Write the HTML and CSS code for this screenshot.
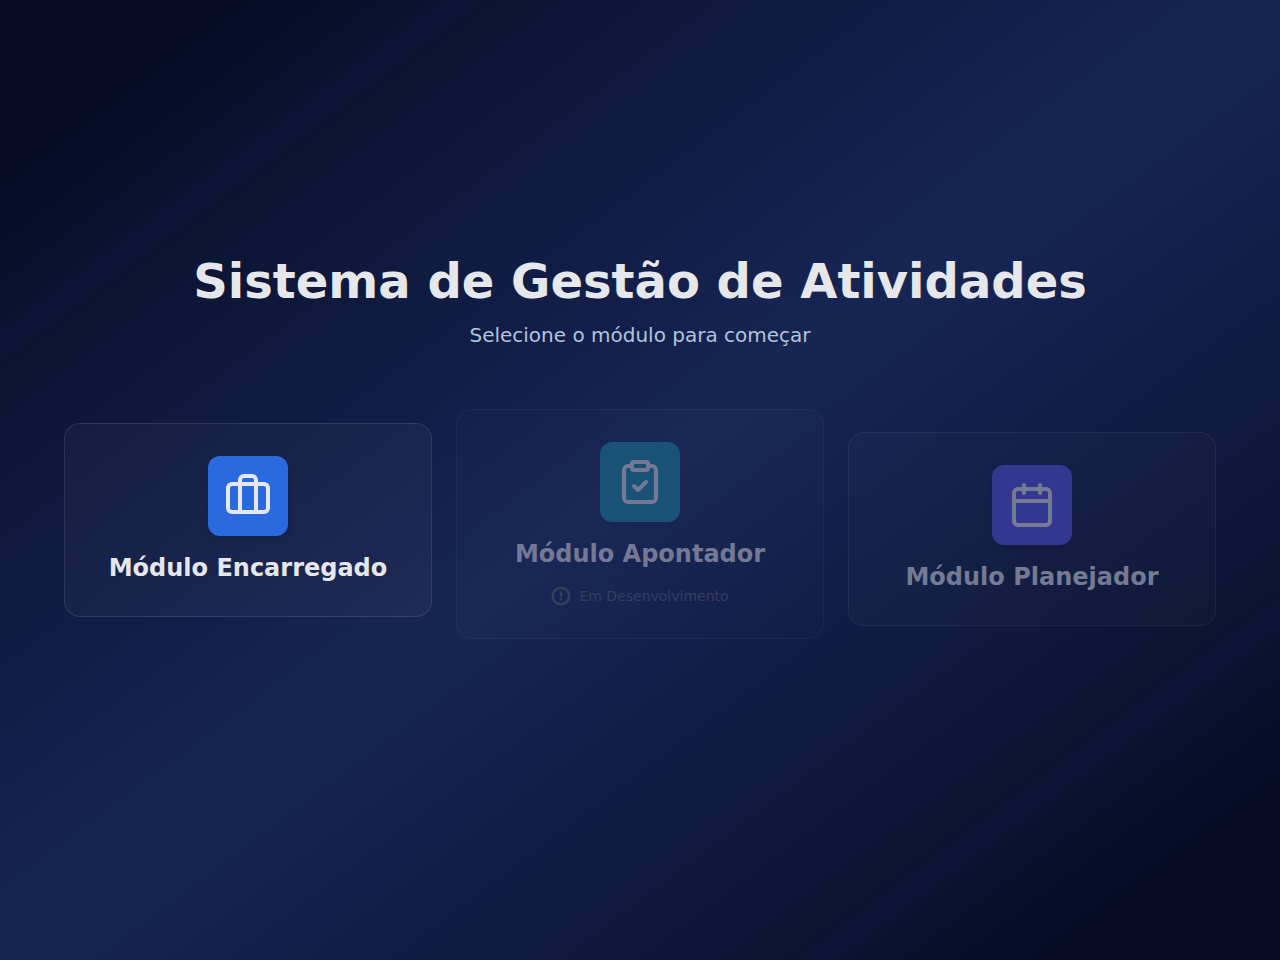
FILE: index.html
```html
<!DOCTYPE html>
<html lang="pt-BR">
<head>
    <meta charset="UTF-8">
    <meta name="viewport" content="width=device-width, initial-scale=1.0">
    <title>Sistema de Gestão de Atividades</title>
    <link rel="stylesheet" href="styles.css">
</head>
<body>

    <main class="pagina">
        <!-- Cabeçalho -->
        <header class="cabecalho">
            <h1>Sistema de Gestão de Atividades</h1>
            <p>Selecione o módulo para começar</p>
        </header>

        <!-- Módulos -->
        <div class="modulos">
            <button type="button" class="modulo encarregado">
                <span class="icone">
                    <svg viewBox="0 0 24 24" aria-hidden="true">
                        <path d="M16 20V4a2 2 0 0 0-2-2h-4a2 2 0 0 0-2 2v16"/>
                        <rect x="2" y="6" width="20" height="14" rx="2"/>
                    </svg>
                </span>
                <span class="nome">Módulo Encarregado</span>
            </button>

            <button type="button" class="modulo apontador">
                <span class="icone">
                    <svg viewBox="0 0 24 24" aria-hidden="true">
                        <rect x="8" y="2" width="8" height="4" rx="1"/>
                        <path d="M16 4h2a2 2 0 0 1 2 2v14a2 2 0 0 1-2 2H6a2 2 0 0 1-2-2V6a2 2 0 0 1 2-2h2"/>
                        <path d="m9 14 2 2 4-4"/>
                    </svg>
                </span>
                <span class="nome">Módulo Apontador</span>
                <span class="aviso">
                    <svg viewBox="0 0 24 24" aria-hidden="true">
                        <circle cx="12" cy="12" r="10"/>
                        <path d="M12 8v4M12 16h.01"/>
                    </svg>
                    Em Desenvolvimento
                </span>
            </button>

            <button type="button" class="modulo planejador">
                <span class="icone">
                    <svg viewBox="0 0 24 24" aria-hidden="true">
                        <path d="M8 2v4M16 2v4"/>
                        <rect x="3" y="4" width="18" height="18" rx="2"/>
                        <path d="M3 10h18"/>
                    </svg>
                </span>
                <span class="nome">Módulo Planejador</span>
            </button>
        </div>
    </main>

</body>
</html>
```
FILE: styles.css
```css
* {
    box-sizing: border-box;
}

body {
    margin: 0;
    font-family: "DejaVu Sans", sans-serif;
    color: #e6e7eb;
    background: #050a23;
}

.pagina {
    min-height: 100vh;
    padding: 0 24px;
    display: flex;
    flex-direction: column;
    align-items: center;
    justify-content: center;
    background: linear-gradient(to bottom right, #060a24 8%, #091230 17%, #0b1638 18%, #0a1432 19%, #131f4a 40%, #172553 49%, #172553 51%, #131f4a 60%, #0a1432 81%, #0b1638 82%, #091230 83%, #060a24 92%);
}

/* Cabeçalho */
.cabecalho {
    margin-bottom: 60px;
    text-align: center;
}

.cabecalho h1 {
    margin: 0 0 16px;
    font-size: 48px;
    line-height: 48px;
    font-weight: bold;
}

.cabecalho p {
    margin: 0;
    font-size: 20px;
    line-height: 28px;
    color: #b2c3dc;
}

/* Módulos */
.modulos {
    width: 100%;
    max-width: 1152px;
    margin-bottom: 64px;
    display: grid;
    grid-template-columns: repeat(3, 1fr);
    align-items: center;
    gap: 24px;
}

.modulo {
    display: flex;
    flex-direction: column;
    align-items: center;
    gap: 16px;
    padding: 32px;
    font-family: inherit;
    color: #e6e7eb;
    background: rgba(255, 255, 255, 0.03);
    border: 1px solid rgba(255, 255, 255, 0.1);
    border-radius: 16px;
    cursor: pointer;
}

.icone {
    width: 80px;
    height: 80px;
    display: flex;
    align-items: center;
    justify-content: center;
    border-radius: 12px;
    box-shadow: 0 4px 6px rgba(0, 0, 0, 0.1);
}

.modulo svg {
    fill: none;
    stroke: currentColor;
    stroke-width: 2;
    stroke-linecap: round;
    stroke-linejoin: round;
}

.icone svg {
    width: 48px;
    height: 48px;
}

.nome {
    font-size: 24px;
    line-height: 32px;
    font-weight: bold;
}

.aviso {
    display: flex;
    align-items: center;
    gap: 8px;
    font-size: 14px;
    line-height: 20px;
    color: #373e5c;
}

.modulo .aviso svg {
    width: 20px;
    height: 20px;
    stroke-width: 3;
}

/* Entrada escalonada dos cartões */
.encarregado {
    margin-bottom: 8px;
}

.encarregado .icone {
    background: #2b69df;
}

.apontador {
    color: #737994;
    background: rgba(255, 255, 255, 0.01);
    border-color: rgba(255, 255, 255, 0.04);
}

.apontador .icone {
    background: #1a5177;
    box-shadow: none;
}

.planejador {
    margin-top: 10px;
    color: #737a94;
    background: rgba(255, 255, 255, 0.02);
    border-color: rgba(255, 255, 255, 0.06);
}

.planejador .icone {
    background: #323790;
}

@media (max-width: 800px) {
    .modulos {
        grid-template-columns: 1fr;
    }
}
```
